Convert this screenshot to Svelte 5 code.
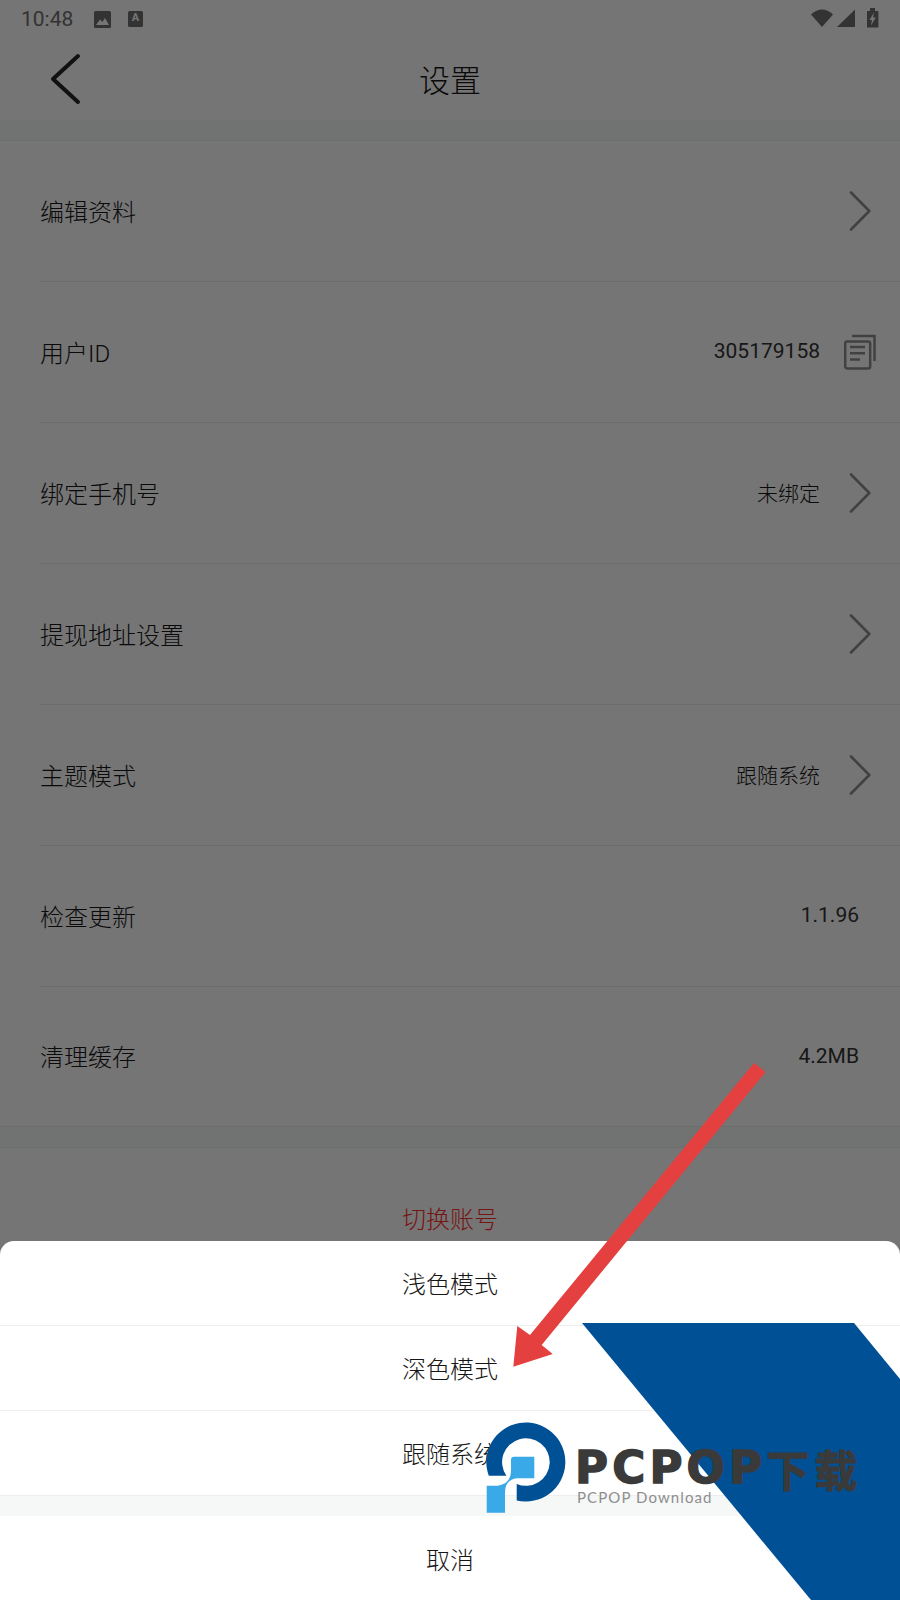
<script>
  const rows = [
    { label: '编辑资料', icon: 'arrow' },
    { label: '用户ID', value: '305179158', num: true, icon: 'copy' },
    { label: '绑定手机号', value: '未绑定', icon: 'arrow' },
    { label: '提现地址设置', icon: 'arrow' },
    { label: '主题模式', value: '跟随系统', icon: 'arrow' },
    { label: '检查更新', value: '1.1.96', num: true },
    { label: '清理缓存', value: '4.2MB', num: true }
  ]
  const themes = ['浅色模式', '深色模式', '跟随系统']
</script>

<div class="screen">
  <div class="page">
    <div class="status">
      <span class="time">10:48</span>
      <svg class="pic" width="17" height="17" viewBox="0 0 17 17">
        <rect width="17" height="17" rx="1.5" fill="#6f6f6f" />
        <path d="M2 14 L6 8.5 L8.3 11 L11 7 L15 14 Z" fill="#fff" />
      </svg>
      <span class="a-icon">A</span>
      <span class="spacer"></span>
      <svg width="68" height="22" viewBox="0 0 68 22">
        <path d="M0 6.5 Q11 -3.5 22 6.5 L11 19 Z" fill="#6f6f6f" />
        <path d="M26 19 L44 1.5 V19 Z" fill="#6f6f6f" />
        <path d="M56 3 H59 V0 H64 V3 H67.4 V19.5 H56 Z" fill="#6f6f6f" />
        <path d="M63 4.5 L58.5 12 H61 L60 17.5 L64.8 9.5 H62 Z" fill="#fff" />
      </svg>
    </div>
    <div class="nav">
      <svg class="back" width="40" height="60" viewBox="0 0 40 60">
        <path d="M32 8 L7 31 L32 54" fill="none" stroke="#252525" stroke-width="4" stroke-linecap="round" stroke-linejoin="round" />
      </svg>
      <div class="title">设置</div>
    </div>
    <div class="band"></div>

    <div class="list">
      {#each rows as row}
        <div class="row" class:has-icon={row.icon}>
          <span class="label">{row.label}</span>
          {#if row.value}<span class="value" class:num={row.num}>{row.value}</span>{/if}
          {#if row.icon == 'arrow'}
            <svg class="icon" width="32" height="40" viewBox="0 0 32 40">
              <path d="M7 1.5 L25.3 20 L7 38.5" fill="none" stroke="#8f8f8f" stroke-width="2.6" stroke-linecap="round" stroke-linejoin="round" />
            </svg>
          {:else if row.icon == 'copy'}
            <svg class="icon" width="32" height="40" viewBox="0 0 32 40">
              <g fill="none" stroke="#8f8f8f" stroke-width="2.5">
                <rect x="1.2" y="9.5" width="25" height="27" rx="2" />
                <path d="M8 4 H30.5 V29" />
                <path d="M6 15 H21 M6 21.3 H21 M6 27.5 H16" />
              </g>
            </svg>
          {/if}
        </div>
      {/each}
    </div>
    <div class="band wide"></div>
    <div class="switch">切换账号</div>
  </div>

  <div class="mask"></div>

  <div class="sheet">
    {#each themes as theme}
      <div class="option">{theme}</div>
    {/each}
    <div class="gap"></div>
    <div class="option cancel">取消</div>
  </div>

  <!-- annotation + watermark pasted over the screenshot -->
  <svg class="overlay" width="900" height="1600" viewBox="0 0 900 1600">
    <path d="M582 1323 H854 L900 1379 V1600 H811 Z" fill="#005096" />
    <path d="M754 1063 L765.7 1072 L541.7 1345 L552.7 1354 L513.3 1366.7 L517.3 1326 L530 1335 Z" fill="#e54040" />
    <path d="M488.8 1475.7 A39.5 39.5 0 1 1 516.7 1500.4 L516.7 1484 A23.8 23.8 0 1 0 506.4 1475.7 Z" fill="#005096" />
    <path d="M514 1456.7 H534.3 V1478.3 H516.7 Q505 1480 505 1492 V1512.7 H486.7 V1485.7 H498 Q511 1484 511 1470 V1460 Q511 1456.7 514 1456.7 Z" fill="#3aa9e8" />
  </svg>
  <div class="mark">
    <div class="mark-main"><span class="latin">PCPOP</span><span class="cjk">下载</span></div>
    <div class="mark-sub">PCPOP Download</div>
  </div>
</div>

<style>
  :global(body) {
    margin: 0;
    background: #fff;
  }

  .screen {
    position: relative;
    width: 900px;
    height: 1600px;
    overflow: hidden;
    font-family: Roboto, "Noto Sans CJK SC", sans-serif;
    font-weight: 300;
    color: #161616;
  }

  .status {
    height: 48px;
    padding: 0 21px 10px 21px;
    display: flex;
    align-items: center;
    box-sizing: border-box;
  }

  .time {
    font-size: 21px;
    font-weight: 400;
    color: #707070;
    width: 73px;
  }

  .a-icon {
    width: 15px;
    height: 16px;
    margin-left: 17px;
    background: #6f6f6f;
    color: #fff;
    border-radius: 1.5px;
    font-size: 11px;
    font-weight: 700;
    line-height: 14px;
    text-align: center;
  }

  .spacer {
    flex: 1;
  }

  .nav {
    height: 72px;
    position: relative;
    display: flex;
    align-items: center;
    justify-content: center;
  }

  .back {
    position: absolute;
    left: 46px;
    top: 0;
  }

  .title {
    font-size: 31px;
    margin-top: -12px;
  }

  .band {
    height: 20px;
    background: #f6f8f8;
    border-bottom: 1px solid #eceeee;
  }

  .band.wide {
    border-top: 1px solid #eceeee;
  }

  .list {
    margin-left: 40px;
  }

  .row {
    height: 141px;
    box-sizing: border-box;
    padding-right: 41px;
    display: flex;
    align-items: center;
    justify-content: space-between;
    border-bottom: 1px solid #eeeeee;
  }

  .row:last-child {
    height: 139px;
    border-bottom: none;
  }

  .row.has-icon {
    padding-right: 24px;
  }

  .label {
    font-size: 24px;
    flex: 1;
    margin-top: -2px;
  }

  .value {
    font-size: 21px;
    margin-top: -2px;
  }

  .value.num {
    font-weight: 400;
    color: #333;
  }

  .icon {
    margin-left: 24px;
  }

  .switch {
    height: 142px;
    padding-bottom: 4px;
    box-sizing: border-box;
    display: flex;
    align-items: center;
    justify-content: center;
    font-size: 24px;
    color: #ff3030;
  }

  .mask {
    position: absolute;
    inset: 0;
    background: rgba(0, 0, 0, 0.54);
  }

  .sheet {
    position: absolute;
    left: 0;
    right: 0;
    bottom: 0;
    height: 359px;
    background: #fff;
    border-radius: 14px 14px 0 0;
  }

  .option {
    height: 85px;
    box-sizing: border-box;
    padding-bottom: 2px;
    display: flex;
    align-items: center;
    justify-content: center;
    font-size: 24px;
    border-bottom: 1px solid #eeeeee;
  }

  .option.cancel {
    height: 84px;
    padding-bottom: 0;
    border-bottom: none;
  }

  .gap {
    height: 20px;
    background: #f6f8f8;
  }

  .overlay {
    position: absolute;
    left: 0;
    top: 0;
  }

  .mark {
    position: absolute;
    left: 575px;
    top: 1446px;
    color: #3a3a3a;
  }

  .mark-main {
    display: flex;
    align-items: center;
    height: 43px;
    line-height: 40px;
  }

  .latin {
    font-family: "DejaVu Sans", sans-serif;
    font-weight: 700;
    font-size: 45px;
    letter-spacing: 4.2px;
    -webkit-text-stroke: 1.5px #3a3a3a;
  }

  .cjk {
    font-family: "Noto Sans CJK SC", sans-serif;
    font-weight: 700;
    font-size: 43px;
    letter-spacing: 5px;
    -webkit-text-stroke: 1px #3a3a3a;
  }

  .mark-sub {
    font-family: Lato, sans-serif;
    font-weight: 400;
    font-size: 15px;
    letter-spacing: 1.1px;
    color: #8e8e8e;
    line-height: 16px;
    margin-left: 2px;
  }
</style>
